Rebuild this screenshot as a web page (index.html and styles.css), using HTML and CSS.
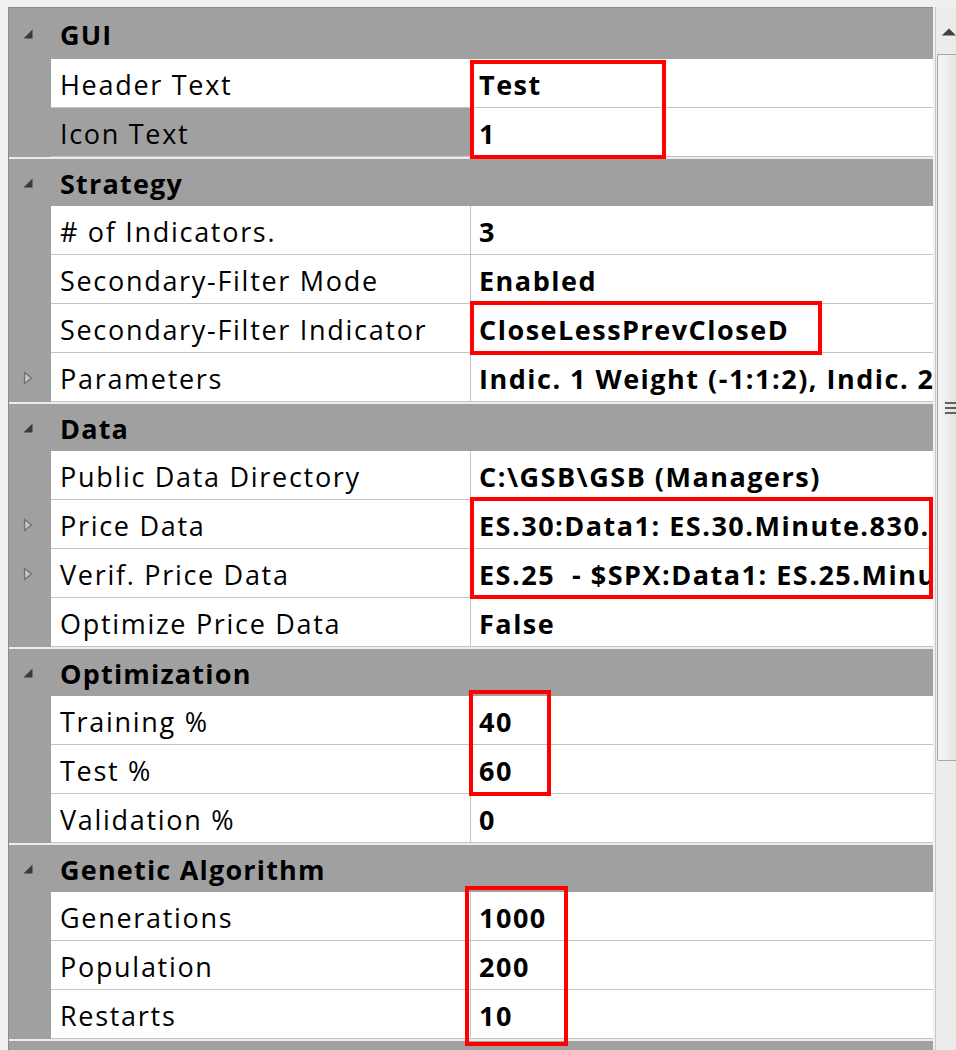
FILE: index.html
```html
<!DOCTYPE html>
<html>
<head>
<meta charset="utf-8">
<link rel="stylesheet" href="styles.css">
</head>
<body>
<div class="page">
  <div class="grid">
    <div class="cat first"><span class="tri"><svg width="12" height="12" viewBox="0 0 12 12"><polygon points="10.5,1.5 10.5,10.5 1.5,10.5" fill="#3a3a3a"/></svg></span><span class="cat-name">GUI</span></div>
    <div class="prop"><span class="mg"></span><span class="lab">Header Text</span><span class="val">Test</span></div>
    <div class="prop sel"><span class="mg"></span><span class="lab">Icon Text</span><span class="val">1</span></div>

    <div class="cat"><span class="tri"><svg width="12" height="12" viewBox="0 0 12 12"><polygon points="10.5,1.5 10.5,10.5 1.5,10.5" fill="#3a3a3a"/></svg></span><span class="cat-name">Strategy</span></div>
    <div class="prop"><span class="mg"></span><span class="lab"># of Indicators.</span><span class="val">3</span></div>
    <div class="prop"><span class="mg"></span><span class="lab">Secondary-Filter Mode</span><span class="val">Enabled</span></div>
    <div class="prop"><span class="mg"></span><span class="lab">Secondary-Filter Indicator</span><span class="val">CloseLessPrevCloseD</span></div>
    <div class="prop"><span class="mg"><svg width="10" height="14" viewBox="0 0 10 14"><polygon points="1.5,1.5 8.5,7 1.5,12.5" fill="#c4c4c4" stroke="#6e6e6e" stroke-width="1.2"/></svg></span><span class="lab">Parameters</span><span class="val">Indic. 1 Weight (-1:1:2), Indic. 2 Weight (-1:1:2), Indic. 3 Weight (-1:1:2)</span></div>

    <div class="cat"><span class="tri"><svg width="12" height="12" viewBox="0 0 12 12"><polygon points="10.5,1.5 10.5,10.5 1.5,10.5" fill="#3a3a3a"/></svg></span><span class="cat-name">Data</span></div>
    <div class="prop"><span class="mg"></span><span class="lab">Public Data Directory</span><span class="val">C:\GSB\GSB (Managers)</span></div>
    <div class="prop"><span class="mg"><svg width="10" height="14" viewBox="0 0 10 14"><polygon points="1.5,1.5 8.5,7 1.5,12.5" fill="#c4c4c4" stroke="#6e6e6e" stroke-width="1.2"/></svg></span><span class="lab">Price Data</span><span class="val">ES.30:Data1: ES.30.Minute.830.1515</span></div>
    <div class="prop"><span class="mg"><svg width="10" height="14" viewBox="0 0 10 14"><polygon points="1.5,1.5 8.5,7 1.5,12.5" fill="#c4c4c4" stroke="#6e6e6e" stroke-width="1.2"/></svg></span><span class="lab">Verif. Price Data</span><span class="val">ES.25&nbsp; - $SPX:Data1: ES.25.Minute</span></div>
    <div class="prop"><span class="mg"></span><span class="lab">Optimize Price Data</span><span class="val">False</span></div>

    <div class="cat"><span class="tri"><svg width="12" height="12" viewBox="0 0 12 12"><polygon points="10.5,1.5 10.5,10.5 1.5,10.5" fill="#3a3a3a"/></svg></span><span class="cat-name">Optimization</span></div>
    <div class="prop"><span class="mg"></span><span class="lab">Training %</span><span class="val">40</span></div>
    <div class="prop"><span class="mg"></span><span class="lab">Test %</span><span class="val">60</span></div>
    <div class="prop"><span class="mg"></span><span class="lab">Validation %</span><span class="val">0</span></div>

    <div class="cat"><span class="tri"><svg width="12" height="12" viewBox="0 0 12 12"><polygon points="10.5,1.5 10.5,10.5 1.5,10.5" fill="#3a3a3a"/></svg></span><span class="cat-name">Genetic Algorithm</span></div>
    <div class="prop"><span class="mg"></span><span class="lab">Generations</span><span class="val">1000</span></div>
    <div class="prop"><span class="mg"></span><span class="lab">Population</span><span class="val">200</span></div>
    <div class="prop"><span class="mg"></span><span class="lab">Restarts</span><span class="val">10</span></div>

    <div class="cat"></div>
  </div>
  <div class="scroll">
    <div class="sb-up"><svg width="20" height="12" viewBox="0 0 20 12"><polygon points="10,2 18,10 2,10" fill="#404040"/></svg></div>
    <div class="sb-thumb"><span class="grip"></span><span class="grip"></span><span class="grip"></span></div>
  </div>
</div>
<div class="mark m1"></div>
<div class="mark m2"></div>
<div class="mark m3"></div>
<div class="mark m4"></div>
<div class="mark m5"></div>
</body>
</html>
```
FILE: styles.css
```css
html, body {
  margin: 0;
  padding: 0;
}
body {
  width: 956px;
  height: 1050px;
  overflow: hidden;
  background: #f0f0f0;
  position: relative;
  font-family: "Open Sans", "Noto Sans", sans-serif;
  font-size: 27px;
  letter-spacing: 1.7px;
  color: #000;
}
.page {
  display: flex;
  padding: 7px 0 0 8px;
  height: 1043px;
}
.grid {
  width: 924px;
  flex: none;
  border-top: 1px solid #8c8c8c;
  border-left: 1px solid #8c8c8c;
  background: #a0a0a0;
  overflow: hidden;
}
.cat {
  display: flex;
  align-items: center;
  height: 47px;
  border-top: 2px solid #ececec;
  background: #a0a0a0;
}
.cat.first {
  height: 51px;
  border-top: none;
}
.tri {
  width: 42px;
  display: flex;
  justify-content: center;
  padding-right: 4px;
  box-sizing: border-box;
}
.cat-name {
  padding-left: 9px;
  font-weight: 700;
  letter-spacing: 1.2px;
  padding-top: 2px;
}
.prop {
  display: grid;
  grid-template-columns: 42px 420px 1fr;
  height: 49px;
}
.mg {
  display: flex;
  align-items: center;
  justify-content: center;
  padding-right: 4px;
}
.lab, .val {
  display: flex;
  align-items: center;
  background: #fff;
  border-bottom: 1px solid #c4c4c4;
  white-space: nowrap;
  overflow: hidden;
  padding-top: 2px;
}
.lab {
  padding-left: 9px;
  border-right: 1px solid #c4c4c4;
}
.val {
  padding-left: 8px;
  font-weight: 700;
  letter-spacing: 1.5px;
}
.prop.sel .lab {
  background: #a0a0a0;
}
.scroll {
  flex: none;
  width: 22px;
  margin-left: 2px;
  border-left: 1px solid #c8c8c8;
  background: #ececec;
  display: flex;
  flex-direction: column;
}
.sb-up {
  height: 44px;
  display: flex;
  align-items: center;
  padding-left: 4px;
  margin-top: 3px;
}
.sb-thumb {
  height: 705px;
  margin-left: 1px;
  border: 1px solid #a8a8a8;
  border-right: none;
  border-radius: 2px 0 0 2px;
  background: linear-gradient(to right, #f6f6f6, #e2e2e2);
  display: flex;
  flex-direction: column;
  justify-content: center;
  gap: 3px;
  padding-left: 7px;
}
.grip {
  display: block;
  height: 2px;
  background: #606060;
}
.mark {
  position: absolute;
  border: 4px solid #ff0000;
  box-sizing: border-box;
}
.m1 { left: 470px; top: 60px; width: 196px; height: 99px; }
.m2 { left: 470px; top: 301px; width: 352px; height: 54px; }
.m3 { left: 470px; top: 497px; width: 463px; height: 102px; }
.m4 { left: 469px; top: 690px; width: 82px; height: 106px; }
.m5 { left: 465px; top: 886px; width: 103px; height: 160px; }
```
